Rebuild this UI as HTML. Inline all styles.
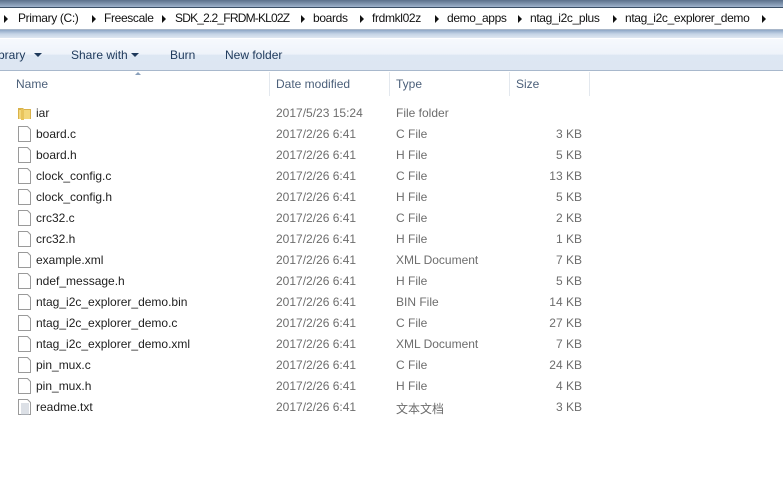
<!DOCTYPE html>
<html><head><meta charset="utf-8"><style>
*{margin:0;padding:0;box-sizing:border-box}
body{width:783px;height:496px;overflow:hidden;background:#fff;font-family:"Liberation Sans","Noto Sans CJK SC",sans-serif;font-size:12px;color:#1e1e1e;position:relative}
.abs{position:absolute;white-space:nowrap}
#top{left:0;top:0;width:783px;height:7px;background:linear-gradient(#5a6f8a,#9fb3cc)}
#addr{left:0;top:7px;width:783px;height:23px;background:#fff;border-top:1px solid #3b4f66;border-bottom:1px solid #a9b7c9}
#blur{left:0;top:30px;width:783px;height:8px;background:linear-gradient(#8ea7c6,#c5d4e6 50%,#dfe7f1)}
#tb{left:0;top:38px;width:783px;height:33px;background:linear-gradient(#f6f9fd 0,#eef3fa 50%,#dde7f3 51%,#dde6f2 100%);border-top:1px solid #fff;border-bottom:1px solid #a8b8cc}
.bc{top:11px;font-size:12px;letter-spacing:-0.35px;color:#111}
.ar{width:0;height:0;border-top:4px solid transparent;border-bottom:4px solid transparent;border-left:4px solid #111}
.tbt{top:48px;font-size:12px;color:#1e395b}
.dd{width:0;height:0;border-left:4px solid transparent;border-right:4px solid transparent;border-top:4px solid #1e395b}
.hd{top:77px;color:#4c607a}
.sep{top:72px;width:1px;height:24px;background:#e3e8ee}
.d{color:#6d6d6d}
</style></head><body>
<div class="abs" id="top"></div>
<div class="abs" id="addr"></div>
<div class="abs ar" style="left:4px;top:15px"></div>
<div class="abs bc" style="left:18px">Primary (C:)</div>
<div class="abs ar" style="left:92px;top:15px"></div>
<div class="abs bc" style="left:104px">Freescale</div>
<div class="abs ar" style="left:162px;top:15px"></div>
<div class="abs bc" style="left:175px;letter-spacing:-0.8px">SDK_2.2_FRDM-KL02Z</div>
<div class="abs ar" style="left:301px;top:15px"></div>
<div class="abs bc" style="left:313px">boards</div>
<div class="abs ar" style="left:360px;top:15px"></div>
<div class="abs bc" style="left:372px">frdmkl02z</div>
<div class="abs ar" style="left:435px;top:15px"></div>
<div class="abs bc" style="left:447px">demo_apps</div>
<div class="abs ar" style="left:518px;top:15px"></div>
<div class="abs bc" style="left:530px">ntag_i2c_plus</div>
<div class="abs ar" style="left:613px;top:15px"></div>
<div class="abs bc" style="left:625px">ntag_i2c_explorer_demo</div>
<div class="abs ar" style="left:762px;top:15px"></div>
<div class="abs" id="blur"></div>
<div class="abs" id="tb"></div>
<div class="abs tbt" style="left:-2px">brary</div>
<div class="abs dd" style="left:34px;top:53px"></div>
<div class="abs tbt" style="left:71px">Share with</div>
<div class="abs dd" style="left:131px;top:53px"></div>
<div class="abs tbt" style="left:170px">Burn</div>
<div class="abs tbt" style="left:225px">New folder</div>
<div class="abs hd" style="left:16px">Name</div>
<div class="abs" style="left:135px;top:72px;width:0;height:0;border-left:3px solid transparent;border-right:3px solid transparent;border-bottom:3px solid #8aa0bb"></div>
<div class="abs sep" style="left:269px"></div>
<div class="abs hd" style="left:276px">Date modified</div>
<div class="abs sep" style="left:389px"></div>
<div class="abs hd" style="left:396px">Type</div>
<div class="abs sep" style="left:509px"></div>
<div class="abs hd" style="left:516px">Size</div>
<div class="abs sep" style="left:589px"></div>
<div id="rows"></div>
<script>
var f=[["iar","2017/5/23 15:24","File folder",""],["board.c","2017/2/26 6:41","C File","3 KB"],["board.h","2017/2/26 6:41","H File","5 KB"],["clock_config.c","2017/2/26 6:41","C File","13 KB"],["clock_config.h","2017/2/26 6:41","H File","5 KB"],["crc32.c","2017/2/26 6:41","C File","2 KB"],["crc32.h","2017/2/26 6:41","H File","1 KB"],["example.xml","2017/2/26 6:41","XML Document","7 KB"],["ndef_message.h","2017/2/26 6:41","H File","5 KB"],["ntag_i2c_explorer_demo.bin","2017/2/26 6:41","BIN File","14 KB"],["ntag_i2c_explorer_demo.c","2017/2/26 6:41","C File","27 KB"],["ntag_i2c_explorer_demo.xml","2017/2/26 6:41","XML Document","7 KB"],["pin_mux.c","2017/2/26 6:41","C File","24 KB"],["pin_mux.h","2017/2/26 6:41","H File","4 KB"],["readme.txt","2017/2/26 6:41","文本文档","3 KB"]];
var h="";
f.forEach(function(r,i){var y=105+i*21;
var ic;
if(i==0)ic='<svg class="abs" style="left:17px;top:'+(y)+'px" width="16" height="16"><path d="M1 3h5l1 1h7v10H1z" fill="#d9b24a"/><path d="M2 5h11v9H2z" fill="#f3d77a"/><path d="M4 4h3v11H4z" fill="#e8c45c"/></svg>';
else{var lines='';if(i==14){for(var k=0;k<6;k++)lines+='<path d="M3 '+(5+k*2)+'h8" stroke="#b8c0cc"/>';}
ic='<svg class="abs" style="left:18px;top:'+(y)+'px" width="14" height="16"><path d="M0.5 0.5h9l3 3v12h-12z" fill="#fff" stroke="#9a9a9a"/>'+lines+'</svg>';}
h+=ic+'<div class="abs" style="left:36px;top:'+(y+1)+'px">'+r[0]+'</div><div class="abs d" style="left:276px;top:'+(y+1)+'px">'+r[1]+'</div><div class="abs d" style="left:396px;top:'+(y+1)+'px">'+r[2]+'</div><div class="abs d" style="right:201px;top:'+(y+1)+'px">'+r[3]+'</div>';});
document.getElementById("rows").innerHTML=h;
</script>
</body></html>
